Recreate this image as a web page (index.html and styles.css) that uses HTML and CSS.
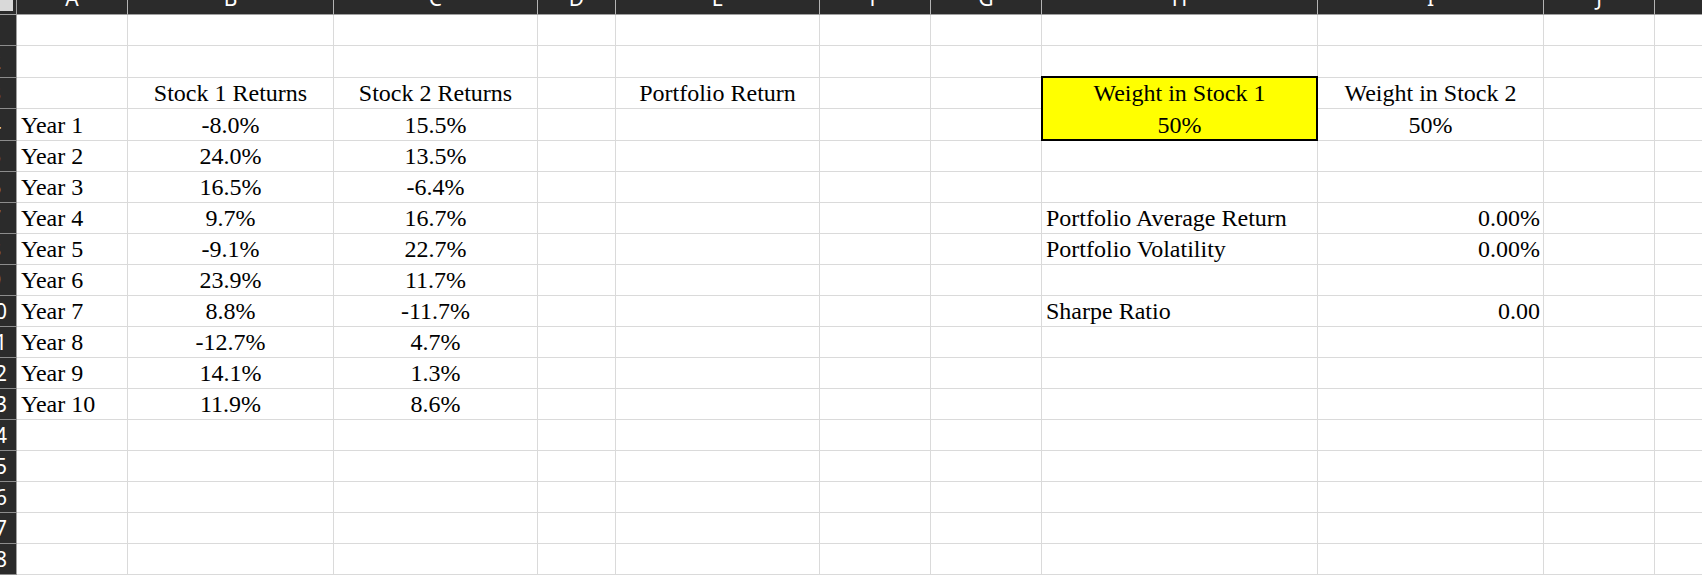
FILE: index.html
```html
<!DOCTYPE html>
<html>
<head>
<meta charset="utf-8">
<link rel="stylesheet" href="styles.css">
</head>
<body>
<div class="sheet">
  <div class="row">
    <div class="corner"><div class="sel"></div></div>
    <div class="ch"><span>A</span></div><div class="ch"><span>B</span></div><div class="ch"><span>C</span></div><div class="ch"><span>D</span></div><div class="ch"><span>E</span></div><div class="ch"><span>F</span></div><div class="ch"><span>G</span></div><div class="ch"><span>H</span></div><div class="ch"><span>I</span></div><div class="ch"><span>J</span></div><div class="ch"><span>K</span></div>
  </div>
  <div class="row">
    <div class="rh"><span>1</span></div>
    <div class="c"></div><div class="c"></div><div class="c"></div><div class="c"></div><div class="c"></div><div class="c"></div><div class="c"></div><div class="c"></div><div class="c"></div><div class="c"></div><div class="c"></div>
  </div>
  <div class="row">
    <div class="rh"><span>2</span></div>
    <div class="c"></div><div class="c"></div><div class="c"></div><div class="c"></div><div class="c"></div><div class="c"></div><div class="c"></div><div class="c"></div><div class="c"></div><div class="c"></div><div class="c"></div>
  </div>
  <div class="row">
    <div class="rh"><span>3</span></div>
    <div class="c"></div>
    <div class="c ctr">Stock 1 Returns</div>
    <div class="c ctr">Stock 2 Returns</div>
    <div class="c"></div>
    <div class="c ctr">Portfolio Return</div>
    <div class="c"></div>
    <div class="c"></div>
    <div class="weight">
      <div class="wt top">Weight in Stock 1</div>
      <div class="wt bottom">50%</div>
    </div>
    <div class="c ctr">Weight in Stock 2</div>
    <div class="c"></div>
    <div class="c"></div>
  </div>
  <div class="row">
    <div class="rh"><span>4</span></div>
    <div class="c">Year 1</div>
    <div class="c ctr">-8.0%</div>
    <div class="c ctr">15.5%</div>
    <div class="c"></div><div class="c"></div><div class="c"></div><div class="c"></div>
    <div class="c ctr">50%</div>
    <div class="c"></div><div class="c"></div>
  </div>
  <div class="row">
    <div class="rh"><span>5</span></div>
    <div class="c">Year 2</div>
    <div class="c ctr">24.0%</div>
    <div class="c ctr">13.5%</div>
    <div class="c"></div><div class="c"></div><div class="c"></div><div class="c"></div><div class="c"></div><div class="c"></div><div class="c"></div><div class="c"></div>
  </div>
  <div class="row">
    <div class="rh"><span>6</span></div>
    <div class="c">Year 3</div>
    <div class="c ctr">16.5%</div>
    <div class="c ctr">-6.4%</div>
    <div class="c"></div><div class="c"></div><div class="c"></div><div class="c"></div><div class="c"></div><div class="c"></div><div class="c"></div><div class="c"></div>
  </div>
  <div class="row">
    <div class="rh"><span>7</span></div>
    <div class="c">Year 4</div>
    <div class="c ctr">9.7%</div>
    <div class="c ctr">16.7%</div>
    <div class="c"></div><div class="c"></div><div class="c"></div><div class="c"></div>
    <div class="c">Portfolio Average Return</div>
    <div class="c rgt">0.00%</div>
    <div class="c"></div><div class="c"></div>
  </div>
  <div class="row">
    <div class="rh"><span>8</span></div>
    <div class="c">Year 5</div>
    <div class="c ctr">-9.1%</div>
    <div class="c ctr">22.7%</div>
    <div class="c"></div><div class="c"></div><div class="c"></div><div class="c"></div>
    <div class="c">Portfolio Volatility</div>
    <div class="c rgt">0.00%</div>
    <div class="c"></div><div class="c"></div>
  </div>
  <div class="row">
    <div class="rh"><span>9</span></div>
    <div class="c">Year 6</div>
    <div class="c ctr">23.9%</div>
    <div class="c ctr">11.7%</div>
    <div class="c"></div><div class="c"></div><div class="c"></div><div class="c"></div><div class="c"></div><div class="c"></div><div class="c"></div><div class="c"></div>
  </div>
  <div class="row">
    <div class="rh"><span>10</span></div>
    <div class="c">Year 7</div>
    <div class="c ctr">8.8%</div>
    <div class="c ctr">-11.7%</div>
    <div class="c"></div><div class="c"></div><div class="c"></div><div class="c"></div>
    <div class="c">Sharpe Ratio</div>
    <div class="c rgt">0.00</div>
    <div class="c"></div><div class="c"></div>
  </div>
  <div class="row">
    <div class="rh"><span>11</span></div>
    <div class="c">Year 8</div>
    <div class="c ctr">-12.7%</div>
    <div class="c ctr">4.7%</div>
    <div class="c"></div><div class="c"></div><div class="c"></div><div class="c"></div><div class="c"></div><div class="c"></div><div class="c"></div><div class="c"></div>
  </div>
  <div class="row">
    <div class="rh"><span>12</span></div>
    <div class="c">Year 9</div>
    <div class="c ctr">14.1%</div>
    <div class="c ctr">1.3%</div>
    <div class="c"></div><div class="c"></div><div class="c"></div><div class="c"></div><div class="c"></div><div class="c"></div><div class="c"></div><div class="c"></div>
  </div>
  <div class="row">
    <div class="rh"><span>13</span></div>
    <div class="c">Year 10</div>
    <div class="c ctr">11.9%</div>
    <div class="c ctr">8.6%</div>
    <div class="c"></div><div class="c"></div><div class="c"></div><div class="c"></div><div class="c"></div><div class="c"></div><div class="c"></div><div class="c"></div>
  </div>
  <div class="row">
    <div class="rh"><span>14</span></div>
    <div class="c"></div><div class="c"></div><div class="c"></div><div class="c"></div><div class="c"></div><div class="c"></div><div class="c"></div><div class="c"></div><div class="c"></div><div class="c"></div><div class="c"></div>
  </div>
  <div class="row">
    <div class="rh"><span>15</span></div>
    <div class="c"></div><div class="c"></div><div class="c"></div><div class="c"></div><div class="c"></div><div class="c"></div><div class="c"></div><div class="c"></div><div class="c"></div><div class="c"></div><div class="c"></div>
  </div>
  <div class="row">
    <div class="rh"><span>16</span></div>
    <div class="c"></div><div class="c"></div><div class="c"></div><div class="c"></div><div class="c"></div><div class="c"></div><div class="c"></div><div class="c"></div><div class="c"></div><div class="c"></div><div class="c"></div>
  </div>
  <div class="row">
    <div class="rh"><span>17</span></div>
    <div class="c"></div><div class="c"></div><div class="c"></div><div class="c"></div><div class="c"></div><div class="c"></div><div class="c"></div><div class="c"></div><div class="c"></div><div class="c"></div><div class="c"></div>
  </div>
  <div class="row">
    <div class="rh"><span>18</span></div>
    <div class="c"></div><div class="c"></div><div class="c"></div><div class="c"></div><div class="c"></div><div class="c"></div><div class="c"></div><div class="c"></div><div class="c"></div><div class="c"></div><div class="c"></div>
  </div>
</div>
</body>
</html>
```

FILE: styles.css
```css
html, body {
  margin: 0;
  padding: 0;
  background: #ffffff;
  overflow: hidden;
}

.sheet {
  display: grid;
  grid-template-columns: 17px 111px 206px 204px 78px 204px 111px 111px 276px 226px 111px 111px;
  grid-template-rows: 15px 31px 32px 31px 32px repeat(14, 31px);
  width: max-content;
  font-family: "Liberation Serif", "Times New Roman", serif;
  font-size: 24px;
  color: #000000;
}

.row {
  display: contents;
}

.corner {
  box-sizing: border-box;
  background: #2b2b2b;
  border-bottom: 1px solid #a0a0a0;
  border-right: 1px solid #a0a0a0;
}

.sel {
  width: 13px;
  height: 11px;
  background: #d9d9d9;
}

.ch {
  box-sizing: border-box;
  background: #2b2b2b;
  border-right: 1px solid #b4b4b4;
  border-bottom: 1px solid #a0a0a0;
  overflow: hidden;
  text-align: center;
  font-family: "Noto Sans", "Open Sans", sans-serif;
  font-size: 21px;
  line-height: 21px;
  color: #ffffff;
}

.ch span {
  display: block;
  margin-top: -12px;
}

.rh {
  box-sizing: border-box;
  background: #2b2b2b;
  border-right: 1px solid #a0a0a0;
  border-bottom: 1px solid #8c8c8c;
  overflow: hidden;
  display: flex;
  align-items: center;
  font-family: "Noto Sans", "Open Sans", sans-serif;
  font-size: 21px;
  color: #ffffff;
}

.rh span {
  flex: none;
  width: 40px;
  margin-left: -25px;
  text-align: center;
  line-height: 1;
}

.c {
  box-sizing: border-box;
  min-width: 0;
  border-right: 1px solid #dadada;
  border-bottom: 1px solid #dadada;
  display: flex;
  align-items: flex-end;
  padding: 0 3px 2px 4px;
  line-height: 26px;
  white-space: nowrap;
}

.ctr {
  justify-content: center;
  padding-left: 3px;
}

.rgt {
  justify-content: flex-end;
}

.weight {
  grid-column: 9;
  grid-row: 4 / span 2;
  margin: -2px 0 0 -1px;
  position: relative;
  z-index: 1;
  box-sizing: border-box;
  border: 2px solid #000000;
  background: #ffff00;
  display: grid;
  grid-template-rows: 31px 1fr;
  line-height: 26px;
  white-space: nowrap;
}

.wt {
  display: flex;
  align-items: flex-end;
  justify-content: center;
}

.wt.top {
  padding-bottom: 3px;
}

.wt.bottom {
  padding-bottom: 1px;
}
```
